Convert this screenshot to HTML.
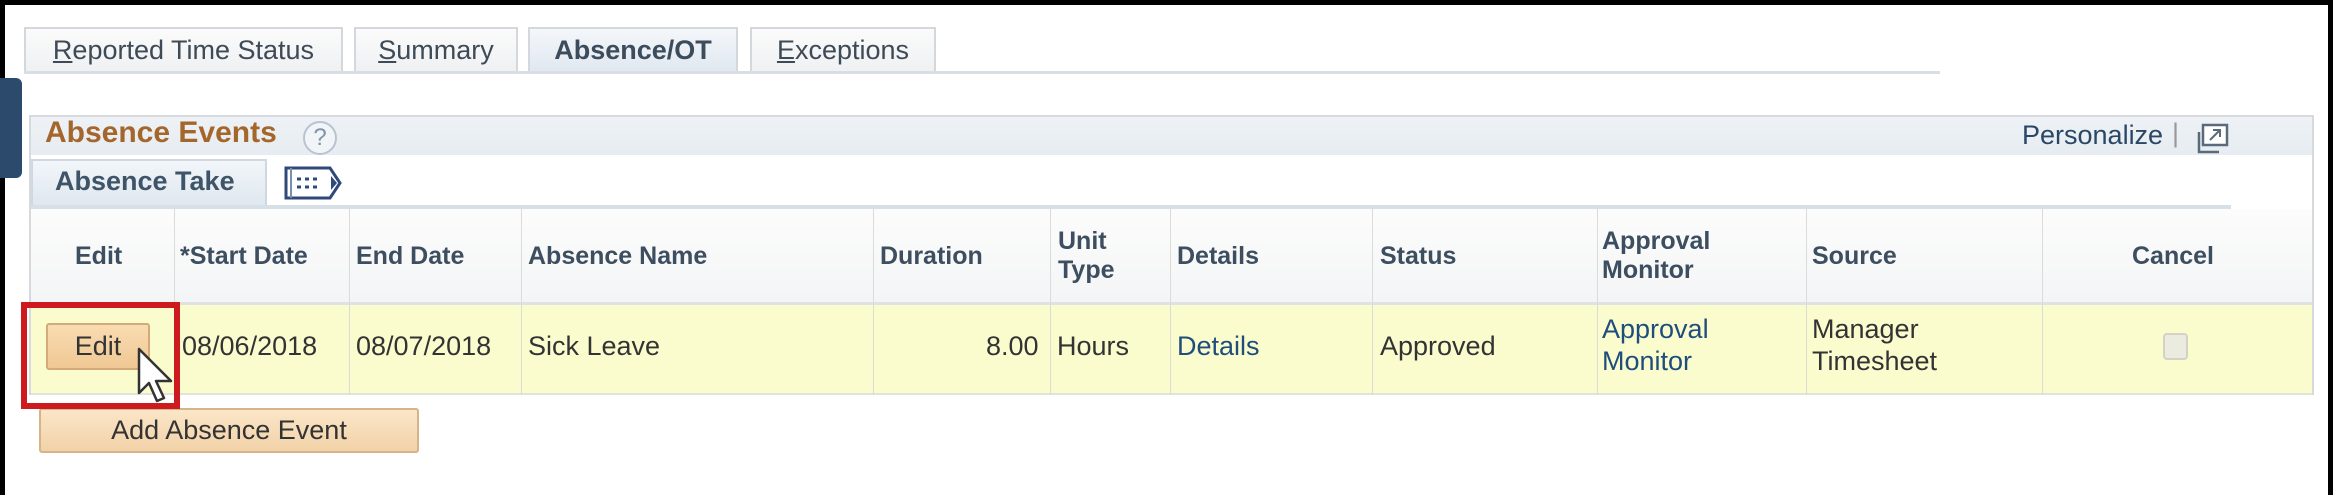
<!DOCTYPE html>
<html><head><meta charset="utf-8"><style>
*{margin:0;padding:0;box-sizing:border-box}
body{width:2350px;height:495px;background:#fff;position:relative;overflow:hidden;font-family:"Liberation Sans",Arial,sans-serif}
.a{position:absolute;white-space:nowrap}
.tab{position:absolute;top:27px;height:46px;border:2px solid #d4d8dc;border-bottom:none;background:linear-gradient(#fbfbfb,#eef0f2);font-size:27px;color:#3e4a56;padding-top:6px;text-align:center}
.hd{font-size:25px;font-weight:bold;color:#3d4e60}
.dt{font-size:27px;color:#333}
.lk{font-size:27px;color:#1f4d7c}
.vl{position:absolute;top:208px;height:187px;width:1px;background:#dcdcd6}
</style></head><body>
<div class="a" style="left:0;top:0;width:2333px;height:5px;background:#000"></div>
<div class="a" style="left:0;top:0;width:5px;height:495px;background:#000"></div>
<div class="a" style="left:2328px;top:0;width:5px;height:495px;background:#000"></div>
<div class="a" style="left:0;top:78px;width:22px;height:100px;background:#2c4a6b;border-radius:0 6px 6px 0"></div>

<div class="tab" style="left:24px;width:319px"><u>R</u>eported Time Status</div>
<div class="tab" style="left:354px;width:164px"><u>S</u>ummary</div>
<div class="tab" style="left:528px;width:210px;background:linear-gradient(#f4f7fa,#dfe7ef);font-weight:bold;color:#3c4c5c">Absence/OT</div>
<div class="tab" style="left:750px;width:186px"><u>E</u>xceptions</div>
<div class="a" style="left:24px;top:71px;width:1916px;height:3px;background:#d8dee4"></div>

<div class="a" style="left:29px;top:115px;width:2285px;height:280px;border:2px solid #d6dadd;border-bottom:none"></div>
<div class="a" style="left:31px;top:117px;width:2281px;height:38px;background:linear-gradient(#eef2f6,#e6ecf1)"></div>
<div class="a" style="left:45px;top:116px;font-size:30px;font-weight:bold;color:#a4662a">Absence Events</div>
<div class="a" style="left:303px;top:121px;width:34px;height:34px;border:2px solid #b8c4d0;border-radius:50%;text-align:center;font-size:24px;color:#8094a8;line-height:30px;background:#f2f5f8">?</div>
<div class="a" style="left:2022px;top:120px;font-size:27px;color:#2a4766">Personalize</div>
<div class="a" style="left:2172px;top:118px;font-size:27px;color:#999">|</div>
<svg class="a" style="left:2193px;top:122px" width="38" height="34" viewBox="0 0 38 34"><rect x="10" y="3" width="24" height="20" fill="#fff" stroke="#5a6a7a" stroke-width="2.5"/><path d="M6 10v20h20" fill="none" stroke="#5a6a7a" stroke-width="2.5"/><path d="M17 18l10-10M20 8h7v7" fill="none" stroke="#5a6a7a" stroke-width="2"/></svg>

<div class="a" style="left:31px;top:159px;width:236px;height:50px;background:linear-gradient(#f2f6fa,#dde6ee);border:2px solid #cfd8e0;border-bottom:none"></div>
<div class="a" style="left:55px;top:166px;font-size:27px;font-weight:bold;color:#3f5468">Absence Take</div>
<svg class="a" style="left:283px;top:165px" width="62" height="36" viewBox="0 0 62 36"><path d="M3 3h44l10 15-10 15H3z" fill="#fff" stroke="#2f4a7a" stroke-width="3"/><path d="M8 3v30" stroke="#7890b0" stroke-width="2"/><path d="M14 14h4M22 14h4M30 14h4M14 22h4M22 22h4M30 22h4" stroke="#2f4a7a" stroke-width="3"/><path d="M48 11l6 7-6 7z" fill="#2f4a7a"/></svg>
<div class="a" style="left:31px;top:205px;width:2200px;height:4px;background:#d7dfe7"></div>

<div class="a" style="left:31px;top:209px;width:2281px;height:93px;background:linear-gradient(#fcfcfc,#f4f5f6)"></div>
<div class="a" style="left:31px;top:302px;width:2281px;height:3px;background:#dfe2e2"></div>
<div class="a" style="left:31px;top:305px;width:2281px;height:88px;background:#fbfcce"></div>
<div class="a" style="left:31px;top:393px;width:2281px;height:2px;background:#e2e4d8"></div>
<div class="vl" style="left:174px"></div><div class="vl" style="left:349px"></div><div class="vl" style="left:521px"></div><div class="vl" style="left:873px"></div><div class="vl" style="left:1050px"></div><div class="vl" style="left:1170px"></div><div class="vl" style="left:1372px"></div><div class="vl" style="left:1597px"></div><div class="vl" style="left:1806px"></div><div class="vl" style="left:2042px"></div>

<div class="a hd" style="left:75px;top:242px">Edit</div>
<div class="a hd" style="left:180px;top:242px">*Start Date</div>
<div class="a hd" style="left:356px;top:242px">End Date</div>
<div class="a hd" style="left:528px;top:242px">Absence Name</div>
<div class="a hd" style="left:880px;top:242px">Duration</div>
<div class="a hd" style="left:1058px;top:227px;line-height:29px">Unit<br>Type</div>
<div class="a hd" style="left:1177px;top:242px">Details</div>
<div class="a hd" style="left:1380px;top:242px">Status</div>
<div class="a hd" style="left:1602px;top:227px;line-height:29px">Approval<br>Monitor</div>
<div class="a hd" style="left:1812px;top:242px">Source</div>
<div class="a hd" style="left:2132px;top:242px">Cancel</div>

<div class="a" style="left:46px;top:323px;width:104px;height:47px;background:linear-gradient(#f9dcb2,#f0c894);border:2px solid #d4aa78;border-radius:3px;font-size:27px;color:#333;text-align:center;line-height:42px">Edit</div>
<div class="a dt" style="left:182px;top:331px">08/06/2018</div>
<div class="a dt" style="left:356px;top:331px">08/07/2018</div>
<div class="a dt" style="left:528px;top:331px">Sick Leave</div>
<div class="a dt" style="left:986px;top:331px">8.00</div>
<div class="a dt" style="left:1057px;top:331px">Hours</div>
<div class="a lk" style="left:1177px;top:331px">Details</div>
<div class="a dt" style="left:1380px;top:331px">Approved</div>
<div class="a lk" style="left:1602px;top:313px;line-height:32px">Approval<br>Monitor</div>
<div class="a dt" style="left:1812px;top:313px;line-height:32px">Manager<br>Timesheet</div>
<div class="a" style="left:2163px;top:333px;width:25px;height:27px;background:#ecebdf;border:2px solid #d3d2c6;border-radius:4px"></div>

<div class="a" style="left:39px;top:408px;width:380px;height:45px;background:linear-gradient(#fbe6c8,#f2d2a8);border:2px solid #d6b48a;border-radius:3px;font-size:27px;color:#333;text-align:center;line-height:40px">Add Absence Event</div>

<div class="a" style="left:21px;top:302px;width:159px;height:107px;border:6px solid #cc1a1f"></div>
<svg class="a" style="left:136px;top:347px" width="44" height="60" viewBox="0 0 44 60"><path d="M3 2v44l10-10 8 18 7-3-8-17h15z" fill="#fff" stroke="#333" stroke-width="2.5" stroke-linejoin="round"/></svg>
</body></html>
